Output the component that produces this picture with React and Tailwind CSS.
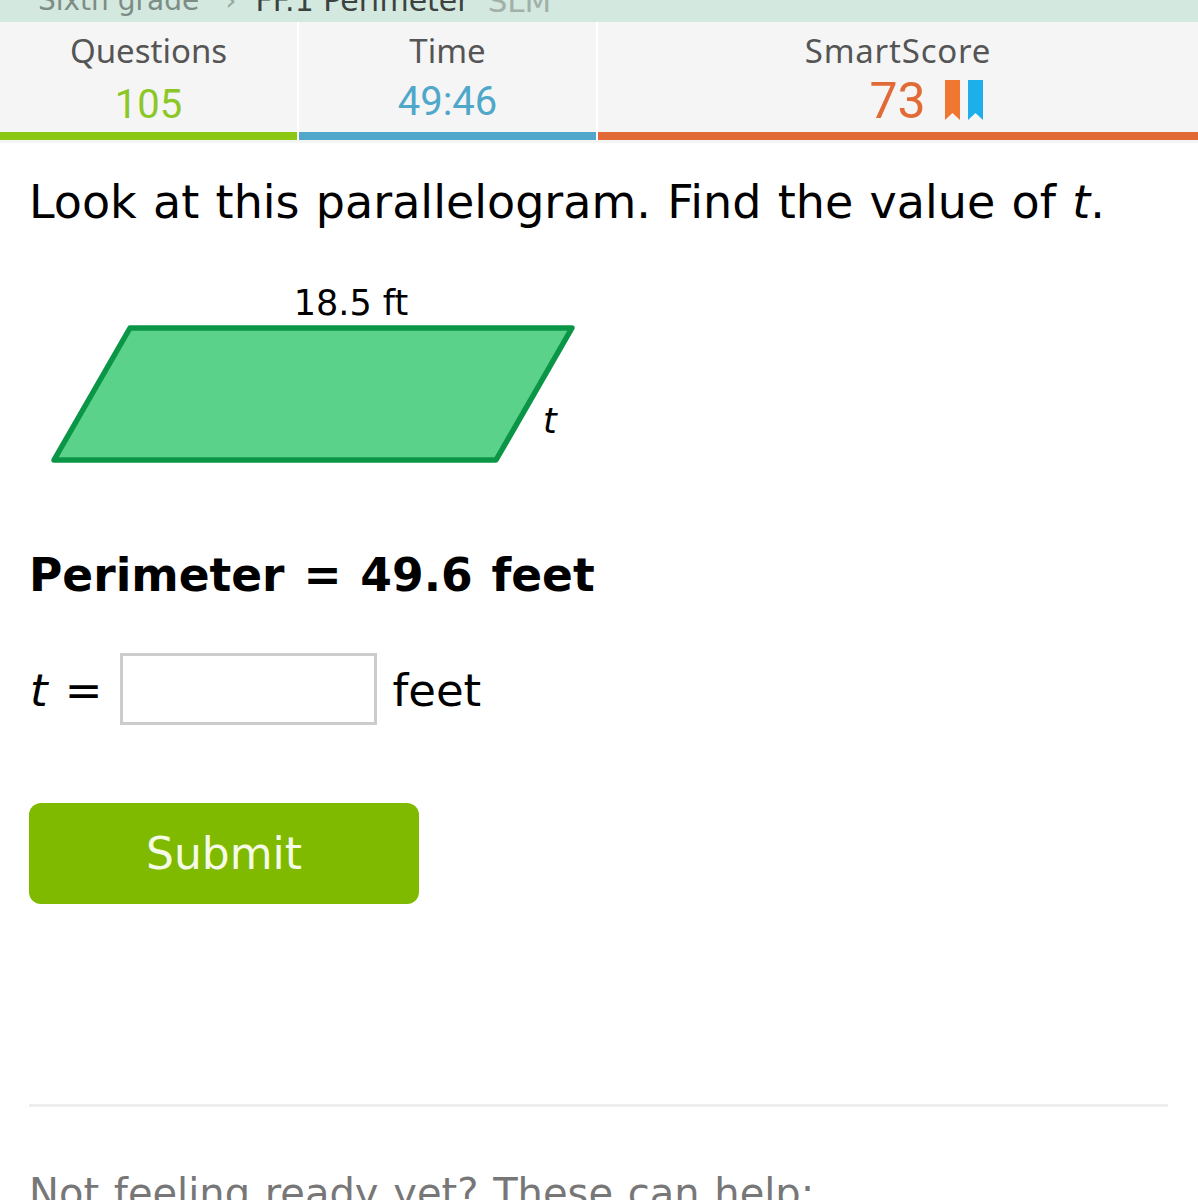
function Stat({ label, width, barClass, labelClass, children }) {
  return (
    <div className={`flex flex-col ${width}`}>
      <div className="flex h-[110px] flex-col items-center bg-[#f5f5f5]">
        <div className={`mt-[11px] font-['Noto_Sans',sans-serif] text-[33px] leading-[36px] text-[#555555] ${labelClass}`}>{label}</div>
        {children}
      </div>
      <div className={`h-[8px] ${barClass}`} />
    </div>
  );
}

function Ribbon({ color }) {
  return (
    <svg width="15" height="40" viewBox="0 0 15 40" className="block">
      <path d="M0 0H15V40L7.5 33L0 40Z" fill={color} />
    </svg>
  );
}

export default function App() {
  return (
    <div className="h-[1200px] w-[1198px] overflow-hidden bg-white font-['DejaVu_Sans',sans-serif] text-black">
      <div className="flex h-[22px] items-end overflow-hidden bg-[#d3e9df] pl-[38px] leading-[32px] whitespace-nowrap">
        <span className="mb-[5px] text-[28px] text-[#7e8c86]">Sixth grade</span>
        <span className="mb-[5px] ml-[26px] text-[28px] text-[#9aa8a2]">›</span>
        <span className="mb-[5px] ml-[19px] text-[30px] text-[#3c4240]">FF.1 Perimeter</span>
        <span className="mb-[5px] ml-[18px] text-[31px] text-[#a3b0aa]">SLM</span>
      </div>

      <div className="flex gap-[2px] font-['Roboto',sans-serif]">
        <Stat label="Questions" width="w-[297px]" barClass="bg-[#8cc713]">
          <div className="mt-[13px] text-[40px] leading-[46px] text-[#8cc728]">105</div>
        </Stat>
        <Stat label="Time" width="w-[297px]" barClass="bg-[#4fa8c9]">
          <div className="mt-[10px] text-[40px] leading-[46px] text-[#4fa8c9]">49:46</div>
        </Stat>
        <Stat label="SmartScore" width="grow" barClass="bg-[#e26a37]" labelClass="tracking-[0.8px]">
          <div className="mt-[7px] flex items-center pl-[56px]">
            <span className="text-[50px] leading-[50px] text-[#e26a37]">73</span>
            <span className="mb-[2px] ml-[19px]"><Ribbon color="#f07732" /></span>
            <span className="mb-[2px] ml-[8px]"><Ribbon color="#1eaeea" /></span>
          </div>
        </Stat>
      </div>
      <div className="h-[3px] bg-[#f4f4f4]" />

      <div className="px-[30px]">
        <p className="mt-[31px] ml-[-1px] text-[46px] leading-[56px] [word-spacing:1.7px] whitespace-nowrap">
          Look at this parallelogram. Find the value of <i>t</i>.
        </p>

        <svg width="560" height="200" viewBox="0 0 560 200" className="mt-[40px] ml-[-10px] block">
          <path
            d="M110 58H552L476 190H34Z"
            fill="#5ad28a"
            stroke="#0b9647"
            strokeWidth="5.5"
            strokeLinejoin="round"
          />
          <text x="331" y="45" textAnchor="middle" fontSize="35" fill="#000" fontFamily="DejaVu Sans, sans-serif">
            18.5 ft
          </text>
          <text x="523" y="163" fontSize="35" fontStyle="italic" fill="#000" fontFamily="DejaVu Sans, sans-serif">
            t
          </text>
        </svg>

        <p className="mt-[78px] ml-[-1px] text-[45.5px] leading-[56px] font-bold [word-spacing:3px] whitespace-nowrap">Perimeter = 49.6 feet</p>

        <div className="mt-[49px] flex h-[72px] items-center text-[45px]">
          <i className="pt-[4px]">t</i>
          <span className="ml-[17px] pt-[4px]">=</span>
          <div className="ml-[18px] h-[72px] w-[257px] border-[3px] border-[#cccccc] bg-white" />
          <span className="ml-[15px] pt-[4px]">feet</span>
        </div>

        <button className="mt-[78px] ml-[-1px] block h-[101px] w-[390px] rounded-[12px] bg-[#80ba00] text-[44px] text-[#f4fae6]">
          Submit
        </button>

        <div className="mt-[200px] ml-[-1px] h-[3px] bg-[#eeeeee]" />
        <p className="mt-[64px] ml-[-1px] text-[40px] leading-[44px] [word-spacing:2px] whitespace-nowrap text-[#777777]">
          Not feeling ready yet? These can help:
        </p>
      </div>
    </div>
  );
}
